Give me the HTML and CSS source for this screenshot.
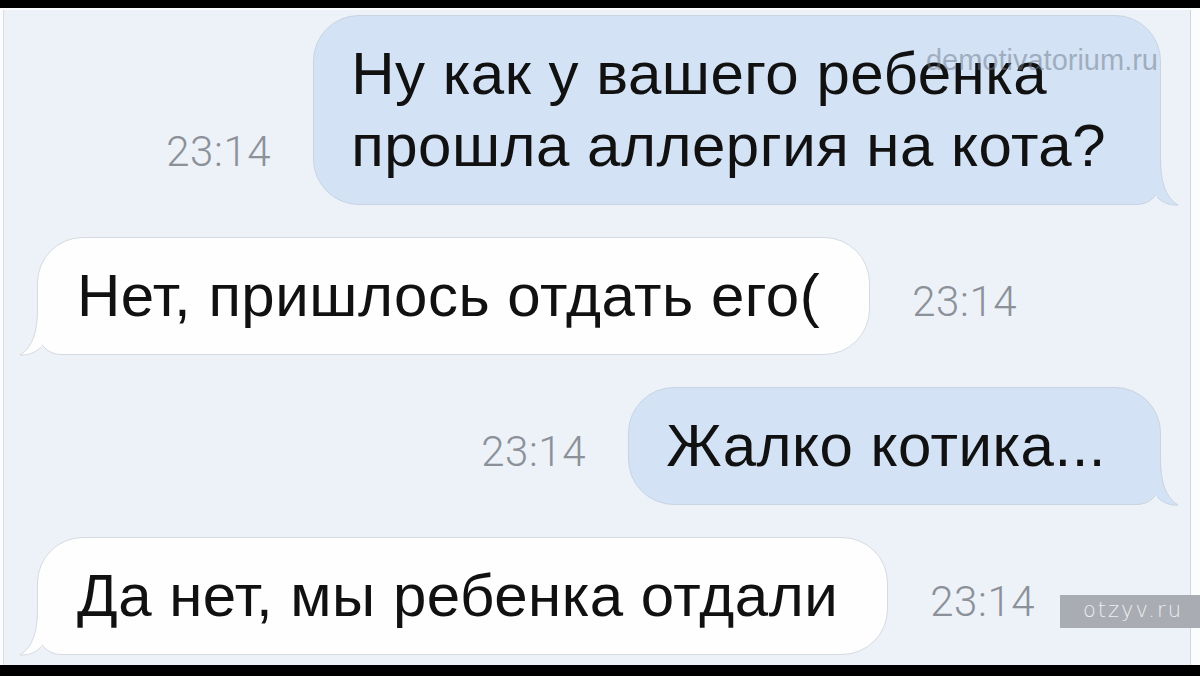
FILE: index.html
```html
<!DOCTYPE html>
<html lang="ru">
<head>
<meta charset="UTF-8">
<meta name="viewport" content="width=device-width, initial-scale=1.0">
<title>Переписка</title>
<link rel="stylesheet" href="styles.css">
</head>
<body>
    <div class="frame">
        <div class="chat">

            <!-- Message 1 (sent) -->
            <div class="row sent">
                <span class="time">23:14</span>
                <div class="bubble blue">
                    Ну как у вашего ребенка<br>прошла аллергия на кота?
                    <span class="mark">demotivatorium.ru</span>
                    <svg class="tail" width="44" height="48" viewBox="0 0 44 48">
                        <path class="tail-fill" d="M0,0 H21.5 C21.5,22 26,38 39,46 C31,46.5 24,44 18,38 Z"/>
                        <path class="tail-line" d="M21.5,0 C21.5,22 26,38 39,46 C31,46.5 24,44 18,38"/>
                    </svg>
                </div>
            </div>

            <!-- Message 2 (received) -->
            <div class="row received">
                <div class="bubble white">
                    Нет, пришлось отдать его(
                    <svg class="tail" width="44" height="48" viewBox="0 0 44 48">
                        <path class="tail-fill" d="M0,0 H21.5 C21.5,22 26,38 39,46 C31,46.5 24,44 18,38 Z"/>
                        <path class="tail-line" d="M21.5,0 C21.5,22 26,38 39,46 C31,46.5 24,44 18,38"/>
                    </svg>
                </div>
                <span class="time">23:14</span>
            </div>

            <!-- Message 3 (sent) -->
            <div class="row sent">
                <span class="time">23:14</span>
                <div class="bubble blue">
                    Жалко котика...
                    <svg class="tail" width="44" height="48" viewBox="0 0 44 48">
                        <path class="tail-fill" d="M0,0 H21.5 C21.5,22 26,38 39,46 C31,46.5 24,44 18,38 Z"/>
                        <path class="tail-line" d="M21.5,0 C21.5,22 26,38 39,46 C31,46.5 24,44 18,38"/>
                    </svg>
                </div>
            </div>

            <!-- Message 4 (received) -->
            <div class="row received">
                <div class="bubble white">
                    Да нет, мы ребенка отдали
                    <svg class="tail" width="44" height="48" viewBox="0 0 44 48">
                        <path class="tail-fill" d="M0,0 H21.5 C21.5,22 26,38 39,46 C31,46.5 24,44 18,38 Z"/>
                        <path class="tail-line" d="M21.5,0 C21.5,22 26,38 39,46 C31,46.5 24,44 18,38"/>
                    </svg>
                </div>
                <span class="time">23:14</span>
            </div>

        </div>
        <div class="stamp">otzyv.ru</div>
    </div>
</body>
</html>
```

FILE: styles.css
```css
html, body {
    margin: 0;
    background: #000;
}

.frame {
    position: relative;
    box-sizing: border-box;
    width: 1200px;
    height: 676px;
    border-top: 8px solid #000;
    border-bottom: 11px solid #000;
    padding: 2px 9px 0 3px;
    background: #fbfcfd;
    overflow: hidden;
}

.chat {
    height: 655px;
    background: #edf1f8;
    border-left: 1px solid #d9dde3;
    border-right: 1px solid #d3d7dd;
    padding-top: 5px;
    box-sizing: border-box;
    display: flex;
    flex-direction: column;
    gap: 32px;
    font-family: "Liberation Sans", Arial, sans-serif;
}

.row {
    display: flex;
    align-items: last baseline;
    gap: 42px;
}

.sent {
    justify-content: flex-end;
    padding-right: 29px;
}

.received {
    justify-content: flex-start;
    padding-left: 33px;
}

.time {
    font-family: Roboto, "Liberation Sans", sans-serif;
    font-weight: 300;
    font-size: 42px;
    letter-spacing: 0.6px;
    color: #8c9199;
}

.bubble {
    position: relative;
    font-size: 60px;
    letter-spacing: 0.5px;
    line-height: 72px;
    color: #111;
    padding: 22px 54px 22px 37px;
    border-radius: 46px 46px 24px 46px;
    border: 1px solid #c9d4e2;
}

.blue {
    background: #d3e2f5;
}

.white {
    background: #fefefe;
    border-color: #d6dae0;
    border-radius: 46px 46px 46px 24px;
    padding: 22px 49px 22px 39px;
}

.tail {
    position: absolute;
    bottom: -3px;
    right: -23px;
}

.white .tail {
    right: auto;
    left: -23px;
    transform: scaleX(-1);
}

.tail-fill {
    fill: #d3e2f5;
}

.white .tail-fill {
    fill: #fefefe;
}

.tail-line {
    fill: none;
    stroke: #c9d4e2;
    stroke-width: 1;
}

.white .tail-line {
    stroke: #d6dae0;
}

/* watermarks */
.mark {
    position: absolute;
    top: 30px;
    right: 2px;
    font-family: "Liberation Sans", Arial, sans-serif;
    font-size: 29px;
    line-height: 29px;
    letter-spacing: 0;
    color: rgba(110, 120, 135, 0.5);
}

.stamp {
    position: absolute;
    right: 0;
    top: 587px;
    width: 140px;
    height: 33px;
    box-sizing: border-box;
    padding-left: 23px;
    background: #a9acb3;
    color: #eceef0;
    font-family: "DejaVu Sans", sans-serif;
    font-weight: 300;
    font-size: 21px;
    line-height: 31px;
    letter-spacing: 2px;
}
```
